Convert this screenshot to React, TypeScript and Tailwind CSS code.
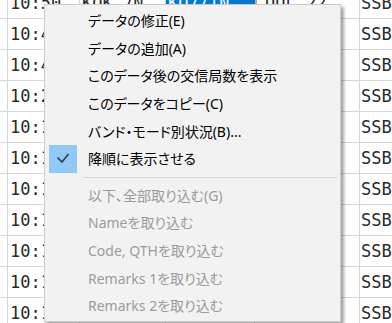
import React from 'react';

const rows = [
  { time: '10:50', call: 'KQK 7N', sel: 'KQ7/TN', qth: 'DDL 22', mode: 'SSB' },
  { time: '10:48', call: 'JA1XYZ', sel: '', qth: '', mode: 'SSB' },
  { time: '10:45', call: 'JH2ABC', sel: '', qth: '', mode: 'SSB' },
  { time: '10:29', call: 'JR3DEF', sel: '', qth: '', mode: 'SSB' },
  { time: '10:19', call: 'JE4GHI', sel: '', qth: '', mode: 'SSB' },
  { time: '10:17', call: 'JF5JKL', sel: '', qth: '', mode: 'SSB' },
  { time: '10:15', call: 'JG6MNO', sel: '', qth: '', mode: 'SSB' },
  { time: '10:14', call: 'JJ7PQR', sel: '', qth: '', mode: 'SSB' },
  { time: '10:12', call: 'JK8STU', sel: '', qth: '', mode: 'SSB' },
  { time: '10:11', call: 'JL9VWX', sel: '', qth: '', mode: 'SSB' },
  { time: '10:10', call: 'JA0YZA', sel: '', qth: '', mode: 'SSB' },
];

const topItems = [
  'データの修正(E)',
  'データの追加(A)',
  'このデータ後の交信局数を表示',
  'このデータをコピー(C)',
  'バンド・モード別状況(B)...',
];

const bottomItems = [
  '以下、全部取り込む(G)',
  'Nameを取り込む',
  'Code, QTHを取り込む',
  'Remarks 1を取り込む',
  'Remarks 2を取り込む',
];

function Grid() {
  return (
    <div className="mt-[-12px] font-['DejaVu_Sans_Mono',monospace] text-[17px] text-[#2a2a2a]">
      {rows.map((r, i) => (
        <div
          key={i}
          className="grid h-[31px] grid-cols-[8px_72px_86px_89px_105px_1fr] border-b border-[#d6d6d6]"
        >
          <div className="border-r border-[#d6d6d6]" />
          <div className="flex items-center overflow-hidden border-r border-[#d6d6d6] pl-[2px] pt-[2px] whitespace-nowrap">
            {r.time}
          </div>
          <div className="flex items-center overflow-hidden border-r border-[#d6d6d6] pl-[2px] pt-[2px] whitespace-nowrap">
            {r.call}
          </div>
          <div
            className={
              i === 0
                ? 'flex items-center overflow-hidden bg-[#0078d7] pl-[2px] pt-[2px] whitespace-nowrap text-white'
                : 'flex items-center overflow-hidden border-r border-[#d6d6d6] pl-[2px] pt-[2px] whitespace-nowrap'
            }
          >
            {r.sel}
          </div>
          <div
            className={
              i === 0
                ? 'flex items-center overflow-hidden border-l-2 border-r border-l-[#e8a050] border-r-[#d6d6d6] pl-[8px] pt-[2px] whitespace-nowrap'
                : 'flex items-center overflow-hidden border-r border-[#d6d6d6] pl-[2px] pt-[2px] whitespace-nowrap'
            }
          >
            {r.qth}
          </div>
          <div className="flex items-center overflow-hidden pl-[1px] pt-[2px] whitespace-nowrap">{r.mode}</div>
        </div>
      ))}
    </div>
  );
}

function Item({ label, disabled, checked }: { label: string; disabled?: boolean; checked?: boolean }) {
  return (
    <div className="flex h-[27.6px] items-center pl-[4px]">
      <div className="flex h-[28px] w-[28px] items-center justify-center">
        {checked && (
          <div className="flex h-[28px] w-[28px] items-center justify-center bg-[#90c8f6]">
            <svg width="28" height="28" viewBox="0 0 28 28">
              <path d="M8.5 12.5 L13 17 L19.5 9" fill="none" stroke="#2f3a44" strokeWidth="1.6" />
            </svg>
          </div>
        )}
      </div>
      <span className={disabled ? 'ml-[11px] whitespace-nowrap text-[#9c9c9c]' : 'ml-[11px] whitespace-nowrap text-black'}>
        {label}
      </span>
    </div>
  );
}

function ContextMenu() {
  return (
    <div className="absolute left-[44px] top-[4px] w-[297px] border border-[#cccccc] bg-[#f2f2f2] pt-[1px] pb-[1px] font-['Noto_Sans','Noto_Sans_CJK_JP',sans-serif] text-[14px] [font-feature-settings:'palt'] shadow-[3px_3px_3px_rgba(0,0,0,0.35)]">
      <div className="pt-[1px]">
        {topItems.map((t) => (
          <Item key={t} label={t} />
        ))}
        <Item label="降順に表示させる" checked />
      </div>
      <div className="flex h-[9px] items-center pl-[38px] pr-[2px]">
        <div className="h-px w-full bg-[#d7d7d7]" />
      </div>
      {bottomItems.map((t) => (
        <Item key={t} label={t} disabled />
      ))}
    </div>
  );
}

export default function App() {
  return (
    <div className="relative h-[323px] w-[392px] overflow-hidden bg-white">
      <Grid />
      <ContextMenu />
    </div>
  );
}
